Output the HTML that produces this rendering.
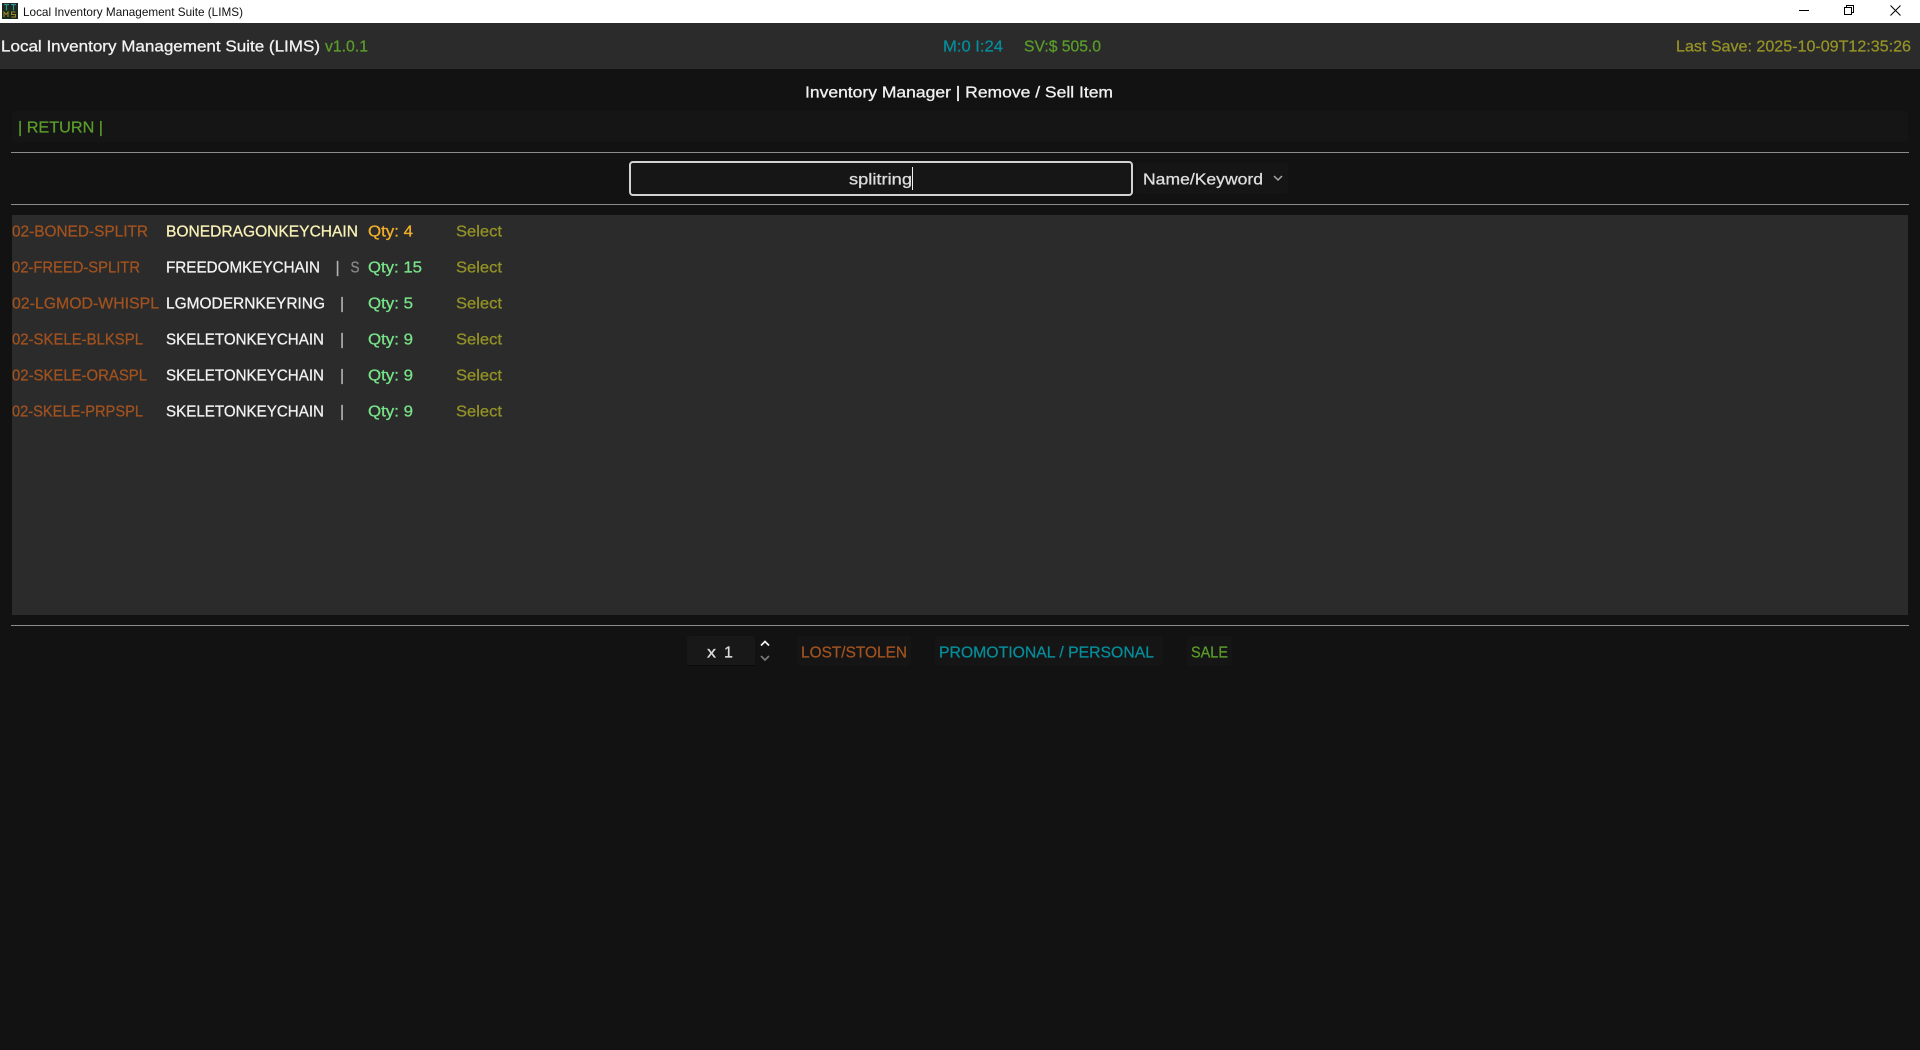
<!DOCTYPE html>
<html lang="en">
<head>
<meta charset="utf-8">
<title>Local Inventory Management Suite (LIMS)</title>
<style>
html,body{margin:0;padding:0;width:1920px;height:1050px;overflow:hidden;background:#121212}
svg{display:block;position:absolute;left:0;top:0}
text{font-family:"Liberation Sans",Arial,sans-serif;font-size:16px}
#c text{stroke-width:.28px}
.o{fill:#a1521f;stroke:#a1521f}
.w{fill:#f2f2f2;stroke:#f2f2f2}
.ol{fill:#949226;stroke:#949226}
.g{fill:#78e488;stroke:#78e488}
.gr{fill:#5a9c2a;stroke:#5a9c2a}
.t{fill:#058d9a;stroke:#058d9a}
.p{fill:#b0b0b0;stroke:#b0b0b0}
.a{fill:#f2b02a;stroke:#f2b02a}
.c{fill:#f8f2b6;stroke:#f8f2b6}
.s{fill:#8a8a8a;stroke:#8a8a8a}
.n{fill:#dedede;stroke:#dedede}
</style>
</head>
<body>
<svg width="1920" height="1050" viewBox="0 0 1920 1050" xmlns="http://www.w3.org/2000/svg">
<rect width="1920" height="1050" fill="#121212"/>
<!-- title bar -->
<rect width="1920" height="23" fill="#ffffff"/>
<rect x="2" y="3" width="16" height="16" fill="#1c2a1e"/>
<path d="M4 4.500h5M6.500 4.500v6M11 4.500h5M13.500 4.500v6" stroke="#2f8f96" stroke-width="1.200" fill="none"/>
<path d="M4 17v-5l2 2.500 2-2.500v5" stroke="#a08a2c" stroke-width="1" fill="none"/>
<path d="M15.500 12h-4v2.500h4v2.500h-4" stroke="#a08a2c" stroke-width="1" fill="none"/>
<text x="23" y="16" style="font-size:12px" fill="#111" textLength="220" lengthAdjust="spacingAndGlyphs">Local Inventory Management Suite (LIMS)</text>
<path d="M1799 10.500h10" stroke="#000" stroke-width="1"/>
<path d="M1844.500 7.500h7v7h-7zM1846.500 7.500v-2h7v7h-2" stroke="#000" stroke-width="1" fill="none"/>
<path d="M1890.500 5.500l10 10M1900.500 5.500l-10 10" stroke="#000" stroke-width="1" fill="none"/>
<!-- header -->
<rect y="23" width="1920" height="46" fill="#2b2b2b"/>
<rect x="12" y="111" width="1896" height="31" rx="3" fill="#151515"/>
<rect x="11" y="152" width="1898" height="1" fill="#8c8c8c"/>
<rect x="630" y="162" width="502" height="33" rx="3" fill="#161616" stroke="#d2d2d2" stroke-width="2"/>
<rect x="912" y="167" width="1" height="23" fill="#f0f0f0"/>
<rect x="1136" y="163" width="152" height="31" rx="3" fill="#151515"/>
<path d="M1274 176l4 4 4-4" stroke="#a8a8a8" stroke-width="1.500" fill="none"/>
<rect x="11" y="204" width="1898" height="1" fill="#8c8c8c"/>
<rect x="12" y="215" width="1896" height="400" fill="#2b2b2b"/>
<rect x="11" y="625" width="1898" height="1" fill="#8c8c8c"/>
<rect x="687" y="636" width="68" height="30" rx="3" fill="#181818"/>
<rect x="687" y="665" width="68" height="1" fill="#0a0a0a"/>
<path d="M761 645.500l4-4 4 4" stroke="#eeeeee" stroke-width="1.800" fill="none"/>
<path d="M761 656l4 4 4-4" stroke="#777777" stroke-width="1.800" fill="none"/>
<rect x="797" y="636" width="114" height="30" rx="3" fill="#151515"/>
<rect x="935" y="636" width="228" height="30" rx="3" fill="#151515"/>
<rect x="1187" y="636" width="45" height="30" rx="3" fill="#151515"/>
<g id="c" transform="translate(0,-0.5)">
<text x="1" y="52" class="w" textLength="319" lengthAdjust="spacingAndGlyphs">Local Inventory Management Suite (LIMS)</text>
<text x="325" y="52" class="gr" textLength="43" lengthAdjust="spacingAndGlyphs">v1.0.1</text>
<text x="943" y="52" class="t" textLength="60" lengthAdjust="spacingAndGlyphs">M:0 I:24</text>
<text x="1024" y="52" class="gr" textLength="77" lengthAdjust="spacingAndGlyphs">SV:$ 505.0</text>
<text x="1676" y="52" class="ol" textLength="235" lengthAdjust="spacingAndGlyphs">Last Save: 2025-10-09T12:35:26</text>
<text x="805" y="98" class="w" textLength="308" lengthAdjust="spacingAndGlyphs">Inventory Manager | Remove / Sell Item</text>
<text x="18" y="133" class="gr" textLength="85" lengthAdjust="spacingAndGlyphs">| RETURN |</text>
<text x="849" y="185" class="n" textLength="63" lengthAdjust="spacingAndGlyphs">splitring</text>
<text x="1143" y="185" class="n" textLength="120" lengthAdjust="spacingAndGlyphs">Name/Keyword</text>

<text x="12" y="237" class="o" textLength="136" lengthAdjust="spacingAndGlyphs">02-BONED-SPLITR</text>
<text x="166" y="237" class="c" textLength="192" lengthAdjust="spacingAndGlyphs">BONEDRAGONKEYCHAIN</text>
<text x="368" y="237" class="a" textLength="45" lengthAdjust="spacingAndGlyphs">Qty: 4</text>
<text x="456" y="237" class="ol" textLength="46" lengthAdjust="spacingAndGlyphs">Select</text>

<text x="12" y="273" class="o" textLength="128" lengthAdjust="spacingAndGlyphs">02-FREED-SPLITR</text>
<text x="166" y="273" class="w" textLength="154" lengthAdjust="spacingAndGlyphs">FREEDOMKEYCHAIN</text>
<text x="335.500" y="273" class="p">|</text>
<text x="350.500" y="273" class="s" textLength="9" lengthAdjust="spacingAndGlyphs">S</text>
<text x="368" y="273" class="g" textLength="54" lengthAdjust="spacingAndGlyphs">Qty: 15</text>
<text x="456" y="273" class="ol" textLength="46" lengthAdjust="spacingAndGlyphs">Select</text>

<text x="12" y="309" class="o" textLength="147" lengthAdjust="spacingAndGlyphs">02-LGMOD-WHISPL</text>
<text x="166" y="309" class="w" textLength="159" lengthAdjust="spacingAndGlyphs">LGMODERNKEYRING</text>
<text x="340" y="309" class="p">|</text>
<text x="368" y="309" class="g" textLength="45" lengthAdjust="spacingAndGlyphs">Qty: 5</text>
<text x="456" y="309" class="ol" textLength="46" lengthAdjust="spacingAndGlyphs">Select</text>

<text x="12" y="345" class="o" textLength="131" lengthAdjust="spacingAndGlyphs">02-SKELE-BLKSPL</text>
<text x="166" y="345" class="w" textLength="158" lengthAdjust="spacingAndGlyphs">SKELETONKEYCHAIN</text>
<text x="340" y="345" class="p">|</text>
<text x="368" y="345" class="g" textLength="45" lengthAdjust="spacingAndGlyphs">Qty: 9</text>
<text x="456" y="345" class="ol" textLength="46" lengthAdjust="spacingAndGlyphs">Select</text>

<text x="12" y="381" class="o" textLength="135" lengthAdjust="spacingAndGlyphs">02-SKELE-ORASPL</text>
<text x="166" y="381" class="w" textLength="158" lengthAdjust="spacingAndGlyphs">SKELETONKEYCHAIN</text>
<text x="340" y="381" class="p">|</text>
<text x="368" y="381" class="g" textLength="45" lengthAdjust="spacingAndGlyphs">Qty: 9</text>
<text x="456" y="381" class="ol" textLength="46" lengthAdjust="spacingAndGlyphs">Select</text>

<text x="12" y="417" class="o" textLength="131" lengthAdjust="spacingAndGlyphs">02-SKELE-PRPSPL</text>
<text x="166" y="417" class="w" textLength="158" lengthAdjust="spacingAndGlyphs">SKELETONKEYCHAIN</text>
<text x="340" y="417" class="p">|</text>
<text x="368" y="417" class="g" textLength="45" lengthAdjust="spacingAndGlyphs">Qty: 9</text>
<text x="456" y="417" class="ol" textLength="46" lengthAdjust="spacingAndGlyphs">Select</text>

<text x="707" y="658" class="n" textLength="9" lengthAdjust="spacingAndGlyphs">x</text>
<text x="724" y="658" class="n">1</text>
<text x="801" y="658" class="o" textLength="106" lengthAdjust="spacingAndGlyphs">LOST/STOLEN</text>
<text x="939" y="658" class="t" textLength="215" lengthAdjust="spacingAndGlyphs">PROMOTIONAL / PERSONAL</text>
<text x="1191" y="658" class="gr" textLength="37" lengthAdjust="spacingAndGlyphs">SALE</text>
</g>
</svg>
</body>
</html>
